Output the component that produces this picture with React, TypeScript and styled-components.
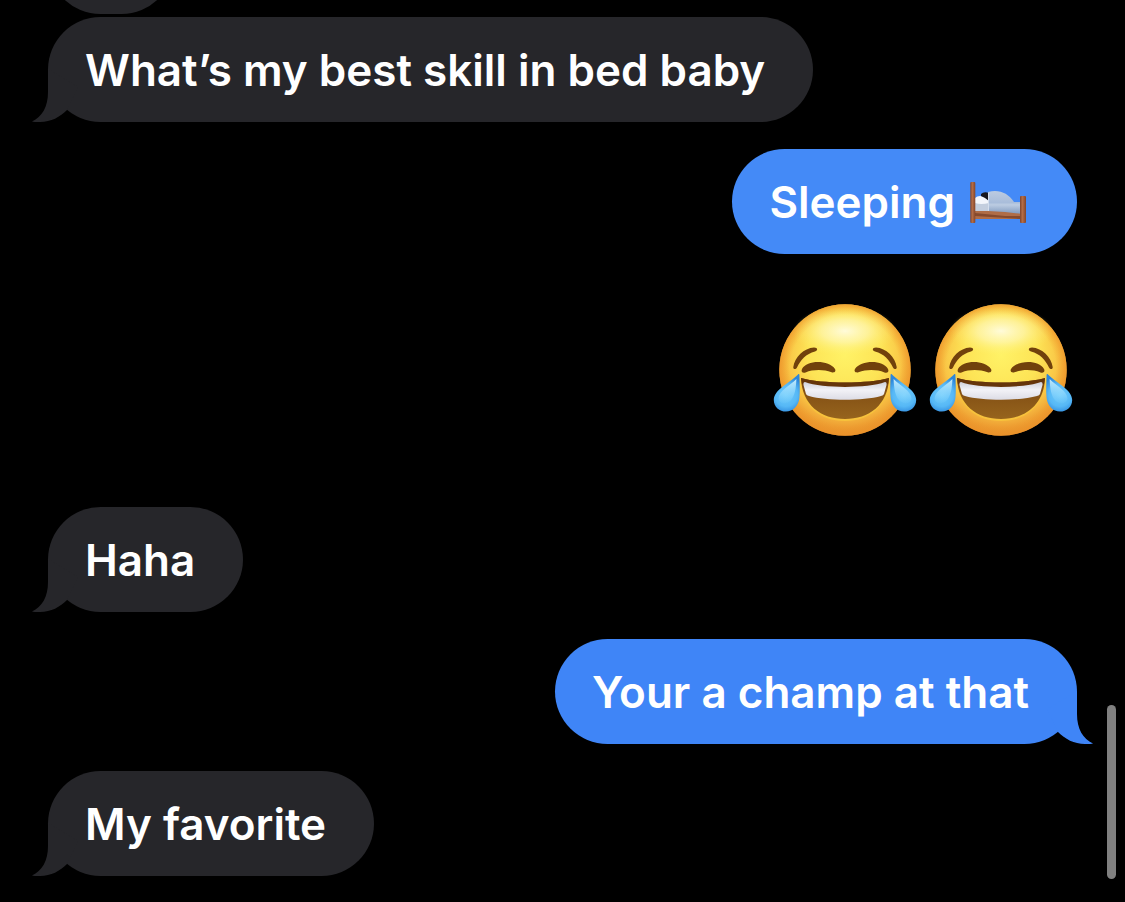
import React from "react";
import styled, { createGlobalStyle } from "styled-components";

const GlobalStyle = createGlobalStyle`
  html, body {
    margin: 0;
    background: #000;
  }
  *, *::before, *::after {
    box-sizing: border-box;
  }
`;

type Side = "left" | "right";

const Screen = styled.main`
  position: relative;
  display: flex;
  flex-direction: column;
  justify-content: flex-end;
  width: 100%;
  height: 100vh;
  overflow: hidden;
  background: #000;
  color: #fff;
  font-family: Inter, "Liberation Sans", sans-serif;
`;

const Thread = styled.ul`
  display: flex;
  flex-direction: column;
  gap: 27px;
  margin: 0;
  padding: 0 48px 26px;
  list-style: none;
`;

const Group = styled.li<{ $side: Side }>`
  display: flex;
  flex-direction: column;
  align-items: ${(p) => (p.$side === "left" ? "flex-start" : "flex-end")};
  gap: 3px;
`;

const Bubble = styled.p<{ $color: string }>`
  position: relative;
  display: flex;
  align-items: center;
  gap: 14px;
  min-width: 126px;
  height: 105px;
  margin: 0;
  padding: 2px 48px 0 37px;
  border-radius: 53px;
  background: ${(p) => p.$color};
  font-size: 44px;
  font-weight: 600;
  line-height: 53px;
  white-space: nowrap;
`;

const TailShape = styled.svg<{ $side: Side }>`
  position: absolute;
  bottom: 0;
  ${(p) => (p.$side === "left" ? "left: -16px;" : "right: -16px; transform: scaleX(-1);")}
`;

const Reactions = styled.div`
  display: flex;
  gap: 12px;
  padding: 46px 4px 43px 0;
`;

const ScrollThumb = styled.div`
  position: absolute;
  right: 9px;
  bottom: 23px;
  width: 9px;
  height: 174px;
  border-radius: 5px;
  background: #808080;
`;

const GRAY = "#26262a";

function Tail({ side, color }: { side: Side; color: string }) {
  return (
    <TailShape $side={side} width="48" height="55" viewBox="0 0 48 55" aria-hidden="true">
      <path
        d="M16 2V25C16 40 10 50 0 54.4C1 55 4 55 8 55C19 55 28 50 35 43L46 20Z"
        fill={color}
      />
    </TailShape>
  );
}

function Bed() {
  return (
    <svg width="60" height="44" viewBox="0 0 60 44" role="img" aria-label="Person in bed">
      <defs>
        <linearGradient id="quilt" x1="0" y1="0" x2="0" y2="1">
          <stop offset="0" stopColor="#bccbe0" />
          <stop offset="0.5" stopColor="#a9bdda" />
          <stop offset="0.6" stopColor="#bccce2" />
          <stop offset="1" stopColor="#7f99be" />
        </linearGradient>
        <linearGradient id="wood" x1="0" y1="0" x2="1" y2="0">
          <stop offset="0" stopColor="#7c432b" />
          <stop offset="0.4" stopColor="#b56d46" />
          <stop offset="1" stopColor="#834529" />
        </linearGradient>
      </defs>
      <rect x="5" y="28" width="48" height="10" fill="#b06d47" />
      <path d="M6 32L36 35H52V38L6 35Z" fill="#854a2e" />
      <path d="M6 21H20V30H6Z" fill="#c3cede" />
      <path d="M6 17Q10 13 18 17L20 22Q12 24 6 22Z" fill="#f3f6fb" />
      <path d="M12 13Q15 10 20 12V20Q17 17 12 15Z" fill="#17171d" />
      <path d="M19 11C30 8 39 12 45 21H53V33Q44 32 36 31L19 30Z" fill="url(#quilt)" />
      <path d="M19.5 12V30" stroke="#d3deed" strokeWidth="1" />
      <rect x="1.3" y="1" width="5" height="41" rx="1" fill="url(#wood)" />
      <rect x="51" y="15" width="6" height="27" rx="1" fill="url(#wood)" />
    </svg>
  );
}

function Joy({ id }: { id: string }) {
  const ref = (name: string) => `url(#${id}-${name})`;
  const half = (
    <>
      <path
        d="M20.3 64C21.5 54 31 45 41 44.4C45 44.4 45 47.6 42 48.4C33 50.6 27.5 57 24 64.5C22.7 66.8 20 66.5 20.3 64Z"
        fill="#71410c"
      />
      <path
        d="M29 66C34 56.5 56 57 62 66C63.4 68.6 61 70 58.6 69.2C50 66.2 40 66.5 32.5 69.5C29.6 70.6 27.7 68.6 29 66Z"
        fill="#71410c"
      />
      <path
        d="M25 71.4C26 70.4 26.4 71 26.4 72C26.6 80 27.2 88 26.4 95C25.4 103 20 108.6 13 108.6C6.4 108.6 0.8 104 0.8 97C0.8 86 17 80 25 71.4Z"
        fill={ref("tear")}
      />
      <path
        d="M23.4 76C17 83 6 87 5.6 95.6C6 101 13 102 17.6 97.6C22 93 23 85 23.4 76Z"
        fill={ref("glint")}
      />
    </>
  );
  return (
    <svg width="144" height="134" viewBox="0 0 144 134" role="img" aria-label="Face with tears of joy">
      <defs>
        <radialGradient id={`${id}-face`} cx="72" cy="52" r="84" gradientUnits="userSpaceOnUse">
          <stop offset="0" stopColor="#fff266" />
          <stop offset="0.45" stopColor="#fde355" />
          <stop offset="0.68" stopColor="#f9c646" />
          <stop offset="0.85" stopColor="#ee9f33" />
          <stop offset="1" stopColor="#dc7d25" />
        </radialGradient>
        <radialGradient id={`${id}-rim`} cx="72" cy="67" r="65.7" gradientUnits="userSpaceOnUse">
          <stop offset="0.84" stopColor="#f2a02c" stopOpacity="0" />
          <stop offset="1" stopColor="#ee962a" stopOpacity=".75" />
        </radialGradient>
        <radialGradient id={`${id}-shine`}>
          <stop offset="0" stopColor="#fffce0" stopOpacity=".95" />
          <stop offset="0.45" stopColor="#fffac4" stopOpacity=".6" />
          <stop offset="1" stopColor="#fff36b" stopOpacity="0" />
        </radialGradient>
        <radialGradient id={`${id}-tear`} cx="13" cy="92" r="19" gradientUnits="userSpaceOnUse">
          <stop offset="0" stopColor="#6fcbfb" />
          <stop offset="0.6" stopColor="#56b8f6" />
          <stop offset="1" stopColor="#2b86db" />
        </radialGradient>
        <linearGradient id={`${id}-glint`} x1="0" y1="0" x2="0" y2="1">
          <stop offset="0" stopColor="#d2f3ff" stopOpacity=".95" />
          <stop offset="1" stopColor="#8bd9ff" stopOpacity=".1" />
        </linearGradient>
        <linearGradient id={`${id}-mouth`} x1="0" y1="0" x2="0" y2="1">
          <stop offset="0" stopColor="#7a4610" />
          <stop offset="1" stopColor="#96641d" />
        </linearGradient>
        <linearGradient id={`${id}-teeth`} x1="0" y1="0" x2="0" y2="1">
          <stop offset="0" stopColor="#cfd0da" />
          <stop offset="0.45" stopColor="#f2f2f7" />
          <stop offset="1" stopColor="#dcdce5" />
        </linearGradient>
      </defs>
      <circle cx="72" cy="67" r="65.7" fill={ref("face")} />
      <circle cx="72" cy="67" r="65.7" fill={ref("rim")} />
      <ellipse cx="72" cy="28" rx="52" ry="25" fill={ref("shine")} />
      <path d="M28 76C48 82 96 82 116 76C116 103 96 118 72 118C47 118 28 103 28 76Z" fill="#f7c23c" />
      <path d="M28 75C48 81 96 81 116 75C115 102 96 116 72 116C48 116 29 102 28 75Z" fill={ref("mouth")} />
      <path d="M28 75C48 81 96 81 116 75L115 81C96 86 48 86 29 81Z" fill="#65350a" />
      <path
        d="M32 79C50 85.5 94 85.5 112 79Q114 79 113.5 82L111 91Q110.5 92.5 108 93C90 98 54 98 36 93Q33.5 92.5 33 91L30.5 82Q30 79 32 79Z"
        fill={ref("teeth")}
      />
      {half}
      <g transform="translate(144 0) scale(-1 1)">{half}</g>
    </svg>
  );
}

interface MessageProps {
  side: Side;
  color: string;
  tail?: boolean;
  children?: React.ReactNode;
}

function Message({ side, color, tail, children }: MessageProps) {
  return (
    <Bubble $color={color}>
      {tail && <Tail side={side} color={color} />}
      {children}
    </Bubble>
  );
}

export default function App() {
  return (
    <>
      <GlobalStyle />
      <Screen>
        <Thread>
          <Group $side="left">
            <Message side="left" color={GRAY} />
            <Message side="left" color={GRAY} tail>
              What’s my best skill in bed baby
            </Message>
          </Group>
          <Group $side="right">
            <Message side="right" color="#448af7">
              Sleeping <Bed />
            </Message>
            <Reactions>
              <Joy id="joy-a" />
              <Joy id="joy-b" />
            </Reactions>
          </Group>
          <Group $side="left">
            <Message side="left" color={GRAY} tail>
              Haha
            </Message>
          </Group>
          <Group $side="right">
            <Message side="right" color="#3f85f7" tail>
              Your a champ at that
            </Message>
          </Group>
          <Group $side="left">
            <Message side="left" color={GRAY} tail>
              My favorite
            </Message>
          </Group>
        </Thread>
        <ScrollThumb />
      </Screen>
    </>
  );
}
